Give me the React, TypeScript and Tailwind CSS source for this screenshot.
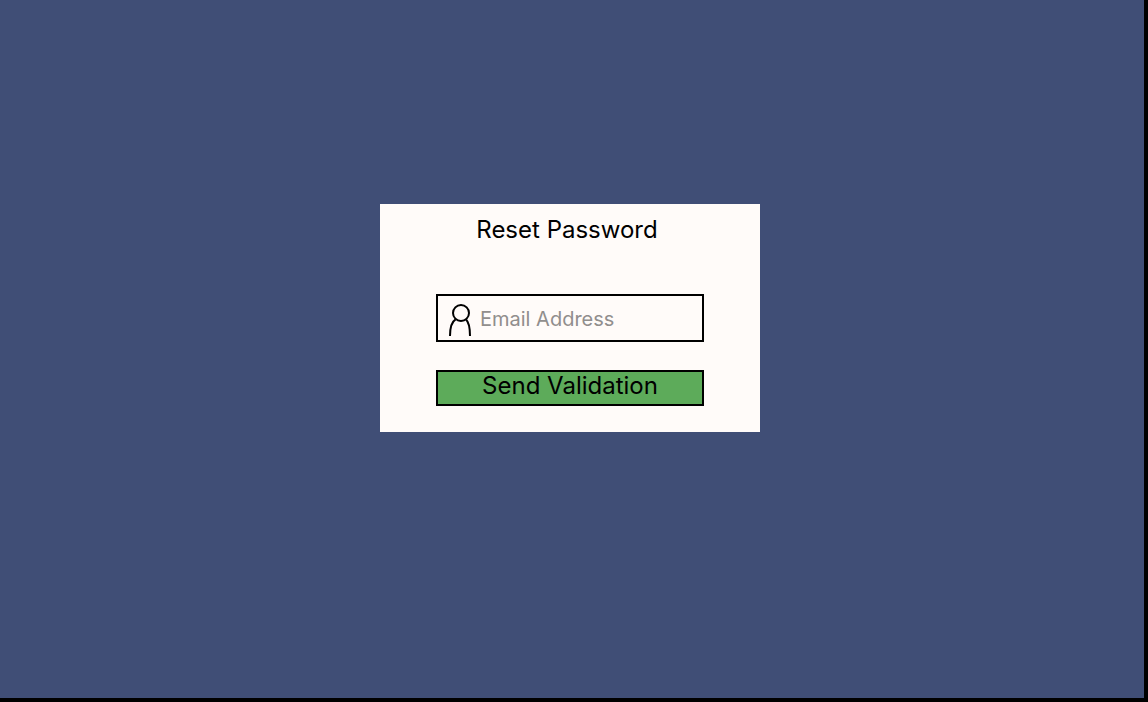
import { useState } from "react";

function UserIcon() {
  return (
    <svg
      className="h-8 w-6 shrink-0"
      viewBox="0 0 24 32"
      fill="none"
      stroke="#000"
      strokeWidth="2"
      aria-hidden="true"
    >
      <ellipse cx="13" cy="9" rx="8" ry="8" />
      <path d="M2 32C2 24.5 3.4 18 7.6 15.4" />
      <path d="M22 32C22 24.5 21.4 18.5 18 15.4" />
    </svg>
  );
}

export default function App() {
  const [email, setEmail] = useState("");

  return (
    <main className="flex min-h-screen items-start justify-center border-r-4 border-b-4 border-black bg-[#404e76] pt-51 pr-1 font-['Inter',sans-serif] text-black">
      <form
        className="flex w-full max-w-[380px] flex-col bg-[#fffbf9] px-14 pt-2 pb-[26px]"
        onSubmit={(event) => event.preventDefault()}
      >
        <h1 className="pr-1.5 text-center text-2xl leading-9">Reset Password</h1>
        <label className="mt-[46px] flex h-12 items-center border-2 border-black pt-1 pl-[10px]">
          <UserIcon />
          <input
            type="email"
            aria-label="Email Address"
            placeholder="Email Address"
            value={email}
            onChange={(event) => setEmail(event.target.value)}
            className="ml-2 min-w-0 flex-1 bg-transparent pb-0.5 text-xl outline-none placeholder:text-[#918e8d]"
          />
        </label>
        <button
          type="submit"
          className="mt-7 h-9 border-2 border-black bg-[#5dab5a] pb-1 text-2xl leading-7"
        >
          Send Validation
        </button>
      </form>
    </main>
  );
}
